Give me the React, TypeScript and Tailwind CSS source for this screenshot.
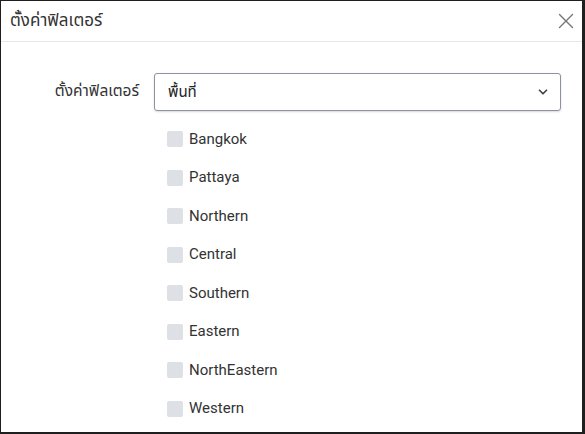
import { ChevronDown, X } from "lucide-react";

const regions = [
  "Bangkok",
  "Pattaya",
  "Northern",
  "Central",
  "Southern",
  "Eastern",
  "NorthEastern",
  "Western",
];

const App = () => {
  return (
    <div
      className="w-[585px] h-[434px] bg-white border-t border-l border-r-[3px] border-b-2 border-[#1f1f1f] overflow-hidden"
      style={{ fontFamily: "Roboto, 'Noto Sans', 'Noto Sans Thai', sans-serif" }}
    >
      <div className="h-[41px] flex items-center justify-between pl-[9px] pr-[3px] border-b border-[#e8e8e8]">
        <h1 className="text-[17px] text-[#333]">ตั้งค่าฟิลเตอร์</h1>
        <X className="h-[26px] w-[26px] text-[#777]" strokeWidth={1.3} />
      </div>

      <div className="flex pt-[31px]">
        <div className="w-[138px] h-[38px] flex items-center justify-end text-[15.5px] text-[#333] shrink-0">
          ตั้งค่าฟิลเตอร์
        </div>
        <div className="ml-[15px] w-[407px]">
          <div className="h-[38px] flex items-center justify-between pl-[13px] pr-[10px] border-[1.5px] border-[#8d91a0] rounded-[3px] shadow-[0_1px_2px_rgba(0,0,0,0.15)] text-[15px] text-[#222]">
            <span>พื้นที่</span>
            <ChevronDown className="h-3.5 w-3.5 text-[#444]" strokeWidth={3} />
          </div>

          <div className="flex flex-col pt-[20px] pl-[13px] gap-[22.5px]">
            {regions.map((r) => (
              <label key={r} className="flex items-center h-[16px]">
                <span className="w-[16px] h-[16px] rounded-[2px] bg-[#dde0e5]" />
                <span className="ml-[6px] text-[15px] text-[#333]">{r}</span>
              </label>
            ))}
          </div>
        </div>
      </div>
    </div>
  );
};

export default App;
